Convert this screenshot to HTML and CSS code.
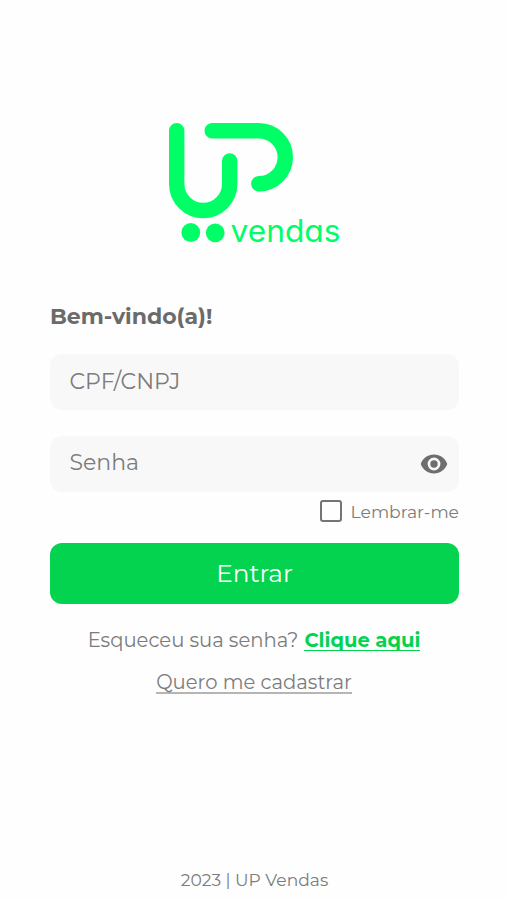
FILE: index.html
```html
<!DOCTYPE html>
<html lang="pt-BR">
<head>
    <meta charset="UTF-8">
    <meta name="viewport" content="width=device-width, initial-scale=1.0">
    <title>UP Vendas - Login</title>
    <link rel="stylesheet" href="styles.css">
</head>
<body>
    <!-- Logo -->
    <header class="logo">
        <svg width="184" height="140" viewBox="164 118 184 140" role="img" aria-label="UP vendas">
            <g class="logo-strokes">
                <path d="M176.7 130.7V184a26.5 26.5 0 0 0 53 0V161" />
                <path d="M212.2 130.7H258.8a26.5 26.5 0 0 1 0 53" />
            </g>
            <circle cx="190.8" cy="232.5" r="9.4" />
            <circle cx="215.2" cy="232.8" r="9.4" />
            <text class="logo-text" x="230.5" y="241.6" textLength="110" lengthAdjust="spacingAndGlyphs">vendas</text>
        </svg>
    </header>

    <!-- Login Form -->
    <main class="login">
        <h1 class="title"><span>Bem-vindo(a)!</span></h1>
        <form class="login-form">
            <div class="field">
                <input class="cpf" type="text" placeholder="CPF/CNPJ" aria-label="CPF/CNPJ">
            </div>
            <div class="field">
                <input class="senha" type="password" placeholder="Senha" aria-label="Senha">
                <svg class="eye" width="28" height="20" viewBox="0 0 28 20">
                    <path fill-rule="evenodd" d="M14 .6C7.900.6 2.700 4.400.7 10c2 5.600 7.200 9.400 13.300 9.400S25.300 15.600 27.300 10C25.300 4.400 20.100.6 14 .6zM14 16.400a6.400 6.400 0 1 1 0-12.800 6.400 6.400 0 0 1 0 12.800z" />
                    <circle cx="14" cy="10" r="3.7" />
                </svg>
            </div>
            <label class="remember">
                <input type="checkbox">
                <span>Lembrar-me</span>
            </label>
            <button class="submit" type="button"><span>Entrar</span></button>
        </form>

        <!-- Links -->
        <p class="forgot"><span>Esqueceu sua senha?</span><a href="#">Clique aqui</a></p>
        <p class="register"><a href="#">Quero me cadastrar</a></p>
    </main>

    <footer class="footer"><span>2023 | UP Vendas</span></footer>
</body>
</html>
```
FILE: styles.css
```css
/* Reset Styles */
* {
    margin: 0;
    padding: 0;
    box-sizing: border-box;
}

body {
    display: flex;
    flex-direction: column;
    height: 100vh;
    padding: 118px 48px 8px 50px;
    overflow: hidden;
    background-color: #fefefe;
    color: #7c7c7c;
    font-family: Montserrat, Inter, sans-serif;
    font-weight: 400;
}

/* Logo */
.logo {
    height: 140px;
    padding-left: 114px;
}

.logo svg {
    display: block;
    fill: #00ff66;
}

.logo-strokes {
    fill: none;
    stroke: #00ff66;
    stroke-width: 15.4;
    stroke-linecap: round;
}

.logo-text {
    font-family: Inter, sans-serif;
    font-size: 31px;
    font-weight: 400;
    font-feature-settings: "cv11";
}

/* Login Form */
.title {
    margin-top: 44px;
    color: #6b6b6b;
    font-size: 22px;
    font-weight: 700;
    line-height: 30px;
}

.login-form {
    display: flex;
    flex-direction: column;
    margin-top: 22px;
}

.field {
    display: flex;
    align-items: center;
    height: 56px;
    margin-bottom: 26px;
    padding: 0 11px 0 19.5px;
    border-radius: 12px;
    background-color: #f8f8f8;
}

.field input {
    flex: 1;
    min-width: 0;
    border: none;
    outline: none;
    background: none;
    font-family: inherit;
    font-size: 22px;
    font-weight: 400;
    line-height: 28px;
}

.field .senha {
    padding-bottom: 2px;
}

.field input::placeholder {
    color: #7c7c7c;
    opacity: 1;
}

.eye {
    fill: #6e6e6e;
}

.remember {
    display: flex;
    align-items: center;
    align-self: flex-end;
    gap: 9px;
    height: 24px;
    margin-top: -19px;
    font-size: 17.2px;
}

.remember input {
    appearance: none;
    width: 22px;
    height: 22px;
    border: 2px solid #747474;
    border-radius: 3px;
}

.submit {
    height: 61px;
    margin-top: 20px;
    padding-bottom: 2px;
    border: none;
    border-radius: 12px;
    background-color: #03d34f;
    color: #fff;
    font-family: inherit;
    font-size: 24.7px;
    font-weight: 400;
}

/* Links */
.forgot,
.register {
    display: flex;
    justify-content: center;
    padding-right: 1px;
    font-size: 19.6px;
    line-height: 24px;
}

.forgot {
    gap: 6px;
    margin-top: 24px;
}

.forgot a {
    border-bottom: 1px solid #03d34f;
    height: 23px;
    color: #03d34f;
    font-weight: 700;
    text-decoration: none;
}

.register {
    margin-top: 18px;
}

.register a {
    height: 24px;
    border-bottom: 2px solid #b5b5b5;
    color: inherit;
    text-decoration: none;
}

/* Footer */
.footer {
    margin-top: auto;
    font-size: 17.1px;
    line-height: 24px;
    text-align: center;
}
```
